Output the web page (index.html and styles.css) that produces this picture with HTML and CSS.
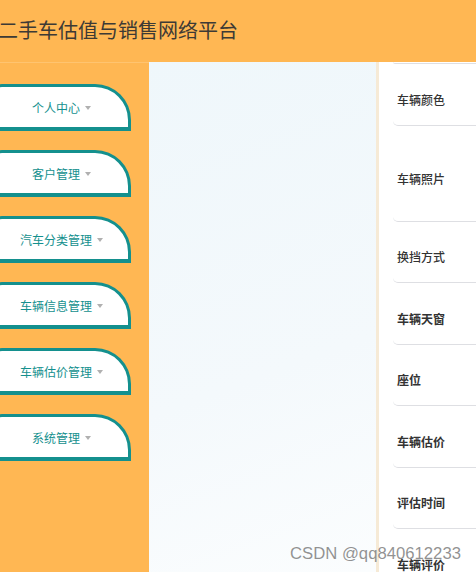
FILE: index.html
```html
<!DOCTYPE html>
<html lang="zh">

    <head>
        <meta charset="UTF-8">
        <meta name="viewport" content="width=device-width, initial-scale=1.0">
        <title>二手车估值与销售网络平台</title>

        <link rel="stylesheet" href="styles.css">

    </head>

    <body>

        <header class="top_bar">
            <h1>二手车估值与销售网络平台</h1>
        </header>

        <div class="layout">
            <nav class="side_menu">
                <div class="menu_item">个人中心<span class="caret"></span></div>
                <div class="menu_item">客户管理<span class="caret"></span></div>
                <div class="menu_item">汽车分类管理<span class="caret"></span></div>
                <div class="menu_item">车辆信息管理<span class="caret"></span></div>
                <div class="menu_item">车辆估价管理<span class="caret"></span></div>
                <div class="menu_item">系统管理<span class="caret"></span></div>
            </nav>

            <main class="content"></main>

            <section class="detail_panel">
                <div class="detail_row row_first"></div>
                <div class="detail_row"><span class="label">车辆颜色</span></div>
                <div class="detail_row row_tall"><span class="label">车辆照片</span></div>
                <div class="detail_row"><span class="label">换挡方式</span></div>
                <div class="detail_row"><span class="label bold">车辆天窗</span></div>
                <div class="detail_row"><span class="label bold">座位</span></div>
                <div class="detail_row"><span class="label bold">车辆估价</span></div>
                <div class="detail_row"><span class="label bold">评估时间</span></div>
                <div class="detail_row"><span class="label bold">车辆评价</span></div>
            </section>
        </div>

        <div class="watermark">CSDN @qq840612233</div>

    </body>

</html>
```

FILE: styles.css
```css
html,
body {
    margin: 0;
    padding: 0;
    height: 100%;
    overflow: hidden;
}

body {
    font-family: "Noto Sans CJK SC", "Noto Sans", sans-serif;
    background-color: #ffffff;
}

.top_bar {
    height: 62px;
    background-color: #ffb753;
    display: flex;
    align-items: center;
}

.top_bar h1 {
    margin: 0 0 4px -2px;
    font-size: 20px;
    font-weight: normal;
    color: #3d3a35;
    white-space: nowrap;
}

.layout {
    display: flex;
    flex-direction: row;
    height: 510px;
}

.side_menu {
    width: 149px;
    flex-shrink: 0;
    background-color: #ffb753;
    border-top: 1px solid #ffc470;
    padding-top: 21px;
    box-sizing: border-box;
    display: flex;
    flex-direction: column;
    gap: 19px;
}

.menu_item {
    width: 139px;
    height: 47px;
    margin-left: -8px;
    box-sizing: border-box;
    background-color: #ffffff;
    border: 3px solid #14908e;
    border-bottom-width: 4px;
    border-radius: 10px 36px 0 0;
    display: flex;
    align-items: center;
    justify-content: center;
    font-size: 12px;
    color: #14908e;
    padding-top: 1px;
}

.caret {
    width: 0;
    height: 0;
    margin-left: 5px;
    border-left: 3px solid transparent;
    border-right: 3px solid transparent;
    border-top: 4px solid #b0b0b0;
}

.content {
    width: 227px;
    flex-shrink: 0;
    background: linear-gradient(160deg, #eff7fb 0%, #f4f9fc 60%, #fbfdfe 100%);
}

.detail_panel {
    flex-grow: 1;
    background-color: #ffffff;
    border-left: 3px solid #f6ead6;
    padding-left: 14px;
    overflow: hidden;
}

.detail_row {
    height: 61.5px;
    box-sizing: border-box;
    border-bottom: 1px solid #dedfe3;
    border-radius: 0 0 0 5px;
    display: flex;
    align-items: center;
    padding-top: 10px;
    padding-left: 4px;
    margin-right: -20px;
}

.row_first {
    height: 2px;
    padding: 0;
}

.row_tall {
    height: 96px;
}

.label {
    font-size: 12px;
    color: #333333;
    font-weight: 500;
}

.label.bold {
    font-weight: bold;
}

.watermark {
    position: absolute;
    left: 290px;
    top: 544px;
    font-family: "Liberation Sans", Arial, sans-serif;
    font-size: 16.7px;
    color: rgba(110, 110, 110, 0.75);
    white-space: nowrap;
}
```
